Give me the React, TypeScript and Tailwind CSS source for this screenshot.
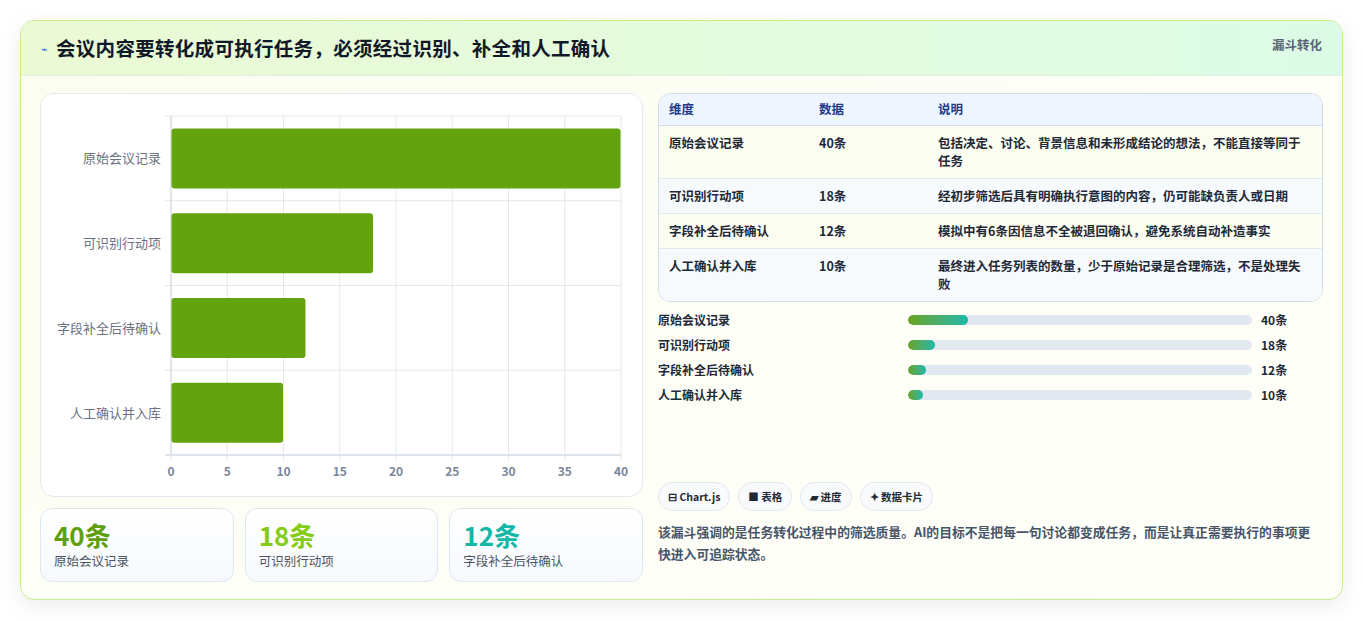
import React from "react";

const font = { fontFamily: '"Noto Sans CJK SC", "Noto Sans", sans-serif' };

const rows = [
  { name: "原始会议记录", v: 40, d: "包括决定、讨论、背景信息和未形成结论的想法，不能直接等同于任务" },
  { name: "可识别行动项", v: 18, d: "经初步筛选后具有明确执行意图的内容，仍可能缺负责人或日期" },
  { name: "字段补全后待确认", v: 12, d: "模拟中有6条因信息不全被退回确认，避免系统自动补造事实" },
  { name: "人工确认并入库", v: 10, d: "最终进入任务列表的数量，少于原始记录是合理筛选，不是处理失败" },
];

function Chart() {
  const x0 = 130, x1 = 580, y0 = 22, y1 = 361;
  const sx = (x1 - x0) / 40;
  const band = (y1 - y0) / 4;
  return (
    <svg width="602" height="403" className="block">
      {[0, 5, 10, 15, 20, 25, 30, 35, 40].map((t) => (
        <g key={t}>
          <line x1={x0 + t * sx} x2={x0 + t * sx} y1={y0} y2={y1 + 6} stroke="#e5e7eb" />
          <text x={x0 + t * sx} y={382} textAnchor="middle" fontSize="12" fontWeight="700" fill="#7a8799" style={font}>{t}</text>
        </g>
      ))}
      {[0, 1, 2, 3, 4].map((i) => (
        <line key={i} x1={x0 - 6} x2={x1} y1={y0 + i * band} y2={y0 + i * band} stroke="#e5e7eb" />
      ))}
      <line x1={x0} x2={x0} y1={y0} y2={y1} stroke="#d1d5db" />
      <line x1={x0 - 6} x2={x1} y1={y1} y2={y1} stroke="#cbd5e1" />
      {rows.map((r, i) => (
        <g key={r.name}>
          <rect x={x0 + 0.5} y={y0 + i * band + 12.5} width={r.v * sx - 1} height={60} rx="3" fill="#62a30e" />
          <text x={120} y={y0 + i * band + band / 2 + 5} textAnchor="end" fontSize="13" fill="#6b7280" style={font}>{r.name}</text>
        </g>
      ))}
    </svg>
  );
}

export default function App() {
  return (
    <div className="w-[1363px] h-[621px] bg-white pt-5 px-5" style={font}>
      <div className="h-[580px] rounded-[14px] border border-[#c9ec8c] shadow-[0_6px_24px_rgba(0,0,0,0.08)] bg-gradient-to-br from-[#fbfdf0] to-[#fffffa] overflow-hidden">
        <div className="h-[55px] flex items-center justify-between px-5 bg-gradient-to-r from-[#ebfad4] to-[#dcfbe6] border-b border-[#e2eee0]">
          <div className="flex items-center gap-2">
            <span className="text-[11px] text-[#2563eb]">⌁</span>
            <span className="text-[19.5px] font-bold text-[#111827] tracking-[0.3px]">会议内容要转化成可执行任务，必须经过识别、补全和人工确认</span>
          </div>
          <span className="self-start mt-[15px] text-[12.5px] font-bold text-[#5b6675]">漏斗转化</span>
        </div>
        <div className="flex gap-[15px] px-[19px] pt-[17px]">
          <div className="w-[603px] flex flex-col gap-[11px]">
            <div className="h-[404px] rounded-[14px] border border-[#e5e9ef] bg-white overflow-hidden">
              <Chart />
            </div>
            <div className="grid grid-cols-3 gap-[11px]">
              {[
                { v: "40条", c: "text-[#5f9f0c]", l: "原始会议记录" },
                { v: "18条", c: "text-[#84cc16]", l: "可识别行动项" },
                { v: "12条", c: "text-[#14b8a6]", l: "字段补全后待确认" },
              ].map((k) => (
                <div key={k.l} className="h-[74px] rounded-[12px] border border-[#dbe7f3] bg-gradient-to-b from-white to-[#f6f9fd] px-[13px] pt-[10px]">
                  <div className={`text-[26px] font-bold leading-[32px] ${k.c}`}>{k.v}</div>
                  <div className="text-[12.5px] text-[#4b5563] mt-[1px]">{k.l}</div>
                </div>
              ))}
            </div>
          </div>
          <div className="flex-1 flex flex-col">
            <div className="rounded-[12px] border border-[#d3dde9] overflow-hidden text-[12.5px] font-semibold text-[#1f2937]">
              <div className="flex h-[32px] items-center bg-[#eef5fe] border-b border-[#d3dde9] text-[#1e3a8a]">
                <div className="w-[160px] pl-[10px]">维度</div>
                <div className="w-[119px]">数据</div>
                <div className="flex-1">说明</div>
              </div>
              {rows.map((r, i) => (
                <div key={r.name} className={`flex py-[8px] ${i % 2 === 0 ? "bg-[#fbfdf1]" : "bg-[#f7fafd]"} ${i < 3 ? "border-b border-[#e3e9f0]" : ""}`}>
                  <div className="w-[160px] pl-[10px] leading-[18px]">{r.name}</div>
                  <div className="w-[119px] leading-[18px]">{r.v}条</div>
                  <div className="flex-1 pr-[12px] leading-[18px]">{r.d}</div>
                </div>
              ))}
            </div>
            <div className="mt-[9px] flex flex-col gap-[7px]">
              {rows.map((r) => (
                <div key={r.name} className="flex items-center h-[18px] text-[12px] font-semibold text-[#1f2937]">
                  <div className="w-[250px]">{r.name}</div>
                  <div className="w-[344px] h-[10px] rounded-full bg-[#e2e8f0] overflow-hidden">
                    <div className="h-full rounded-full bg-gradient-to-r from-[#65a30d] to-[#14b8a6]" style={{ width: `${r.v * 1.5}px` }} />
                  </div>
                  <div className="ml-[9px]">{r.v}条</div>
                </div>
              ))}
            </div>
            <div className="mt-auto flex gap-[8px]">
              {["⊟ Chart.js", "■ 表格", "▰ 进度", "✦ 数据卡片"].map((c) => (
                <span key={c} className="h-[29px] px-[9px] flex items-center rounded-full border border-[#e2e8f0] bg-[#f8fafc] text-[10.5px] font-semibold text-[#1f2937]">{c}</span>
              ))}
            </div>
            <p className="mt-[10px] text-[12.8px] font-semibold leading-[22px] text-[#475569] mb-[17px]">该漏斗强调的是任务转化过程中的筛选质量。AI的目标不是把每一句讨论都变成任务，而是让真正需要执行的事项更快进入可追踪状态。</p>
          </div>
        </div>
      </div>
    </div>
  );
}
